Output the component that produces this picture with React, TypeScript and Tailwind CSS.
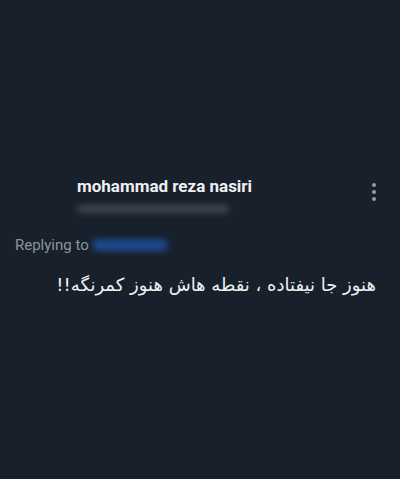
import React from "react";

function App() {
	return (
		<div className="w-[400px] h-[479px] bg-[#18202b] overflow-hidden" style={{ fontFamily: "Roboto, 'DejaVu Sans', sans-serif" }}>
			<div className="pt-[176px] pl-[77px] pr-[24px] flex justify-between">
				<div className="flex flex-col">
					<div className="text-[17px] leading-[20px] font-bold text-[#eef0f2]">mohammad reza nasiri</div>
					<div className="mt-[9px] h-[8px] w-[152px] rounded-full bg-[#3d4652] blur-[3px]" />
				</div>
				<div className="flex flex-col gap-[3px] pt-[7px]">
					<span className="w-[4px] h-[4px] rounded-full bg-[#949da7]" />
					<span className="w-[4px] h-[4px] rounded-full bg-[#949da7]" />
					<span className="w-[4px] h-[4px] rounded-full bg-[#949da7]" />
				</div>
			</div>
			<div className="mt-[22px] pl-[15px] flex items-center">
				<span className="text-[15px] leading-[20px] text-[#8b959f]">Replying to</span>
				<span className="ml-[4px] h-[12px] w-[74px] rounded-sm bg-[#1d4a8e] blur-[3px]" />
			</div>
			<div
				dir="rtl"
				className="mt-[17px] pr-[24px] text-[18px] leading-[26px] text-[#eef0f2]"
				style={{ fontFamily: "'DejaVu Sans', 'Noto Sans', sans-serif" }}
			>
				هنوز جا نیفتاده ، نقطه هاش هنوز کمرنگه!!
			</div>
		</div>
	);
}

export default App;
